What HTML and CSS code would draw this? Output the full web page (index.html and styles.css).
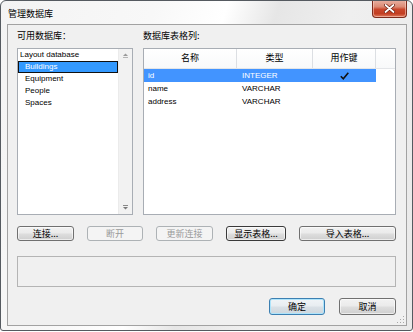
FILE: index.html
```html
<!DOCTYPE html>
<html lang="zh">
<head>
<meta charset="utf-8">
<title>管理数据库</title>
<link rel="stylesheet" href="styles.css">
</head>
<body>
<div class="window">
  <div class="titlebar">
    <span class="title">管理数据库</span>
    <div class="close">
      <svg width="11" height="9" viewBox="0 0 11 9">
        <path d="M1.5 1 L9.5 8 M9.5 1 L1.5 8" stroke="#6b2214" stroke-width="3.2" stroke-linecap="round"/>
        <path d="M1.5 1 L9.5 8 M9.5 1 L1.5 8" stroke="#ffffff" stroke-width="1.7" stroke-linecap="round"/>
      </svg>
    </div>
  </div>
  <div class="client">
    <div class="top">
      <div class="pane left">
        <div class="label">可用数据库：</div>
        <div class="listbox">
          <ul class="items">
            <li class="root">Layout database</li>
            <li class="sel">Buildings</li>
            <li>Equipment</li>
            <li>People</li>
            <li>Spaces</li>
          </ul>
          <div class="vscroll">
            <svg width="7" height="5" viewBox="0 0 7 5"><path d="M3.5 0.5 L6 3 L1 3 Z" fill="#9a9a9a"/><rect x="1" y="4" width="5" height="1" fill="#b5b5b5"/></svg>
            <svg width="7" height="5" viewBox="0 0 7 5"><rect x="1" y="0" width="5" height="1" fill="#8a8a8a"/><path d="M1 2 L6 2 L3.5 4.5 Z" fill="#7a7a7a"/></svg>
          </div>
        </div>
      </div>
      <div class="pane right">
        <div class="label">数据库表格列:</div>
        <div class="table">
          <div class="thead">
            <div class="th c1">名称</div>
            <div class="th c2">类型</div>
            <div class="th c3">用作键</div>
            <div class="th c4"></div>
          </div>
          <div class="tr sel">
            <div class="td c1">id</div>
            <div class="td c2">INTEGER</div>
            <div class="td c3 chk">
              <svg width="9" height="8" viewBox="0 0 9 8"><path d="M0.8 4.2 L3.3 6.8 L8.3 0.8" fill="none" stroke="#111" stroke-width="1.6"/></svg>
            </div>
          </div>
          <div class="tr">
            <div class="td c1">name</div>
            <div class="td c2">VARCHAR</div>
            <div class="td c3"></div>
          </div>
          <div class="tr">
            <div class="td c1">address</div>
            <div class="td c2">VARCHAR</div>
            <div class="td c3"></div>
          </div>
        </div>
      </div>
    </div>
    <div class="btnrow">
      <div class="btn w57">连接...</div>
      <div class="btn dis w56">断开</div>
      <div class="btn dis w57">更新连接</div>
      <div class="btn focus w60">显示表格...</div>
      <div class="btn w97">导入表格...</div>
    </div>
    <div class="status"></div>
    <div class="okrow">
      <div class="btn default w56">确定</div>
      <div class="btn w57">取消</div>
    </div>
    <div class="grip">
      <svg width="8" height="8" viewBox="0 0 8 8">
        <rect x="6" y="0" width="1" height="1" fill="#a8a8a8"/>
        <rect x="3" y="3" width="1" height="1" fill="#a8a8a8"/>
        <rect x="6" y="3" width="1" height="1" fill="#a8a8a8"/>
        <rect x="0" y="6" width="1" height="1" fill="#a8a8a8"/>
        <rect x="3" y="6" width="1" height="1" fill="#a8a8a8"/>
        <rect x="6" y="6" width="1" height="1" fill="#a8a8a8"/>
      </svg>
    </div>
  </div>
</div>
</body>
</html>
```

FILE: styles.css
```css
* {
  box-sizing: border-box;
  margin: 0;
  padding: 0;
}

body {
  margin: 0;
  background: #ffffff;
  font-family: "Liberation Sans", "Noto Sans CJK SC", sans-serif;
  font-size: 9px;
  color: #000;
}

.window {
  width: 413px;
  height: 331px;
  border: 1px solid #555a60;
  border-radius: 6px 6px 3px 3px;
  background: linear-gradient(108deg, #f3f3f3 0%, #f8f8f8 30%, #ffffff 44%, #e6e6e6 54%, #efefef 68%, #e9e9e9 100%);
  display: flex;
  flex-direction: column;
  position: relative;
  overflow: hidden;
}

.titlebar {
  height: 23px;
  display: flex;
  align-items: flex-start;
}

.title {
  padding: 7px 0 0 7px;
  line-height: 12px;
  font-family: "Noto Sans CJK SC", sans-serif;
  font-size: 9px;
}

.close {
  margin-left: auto;
  margin-right: 5px;
  margin-top: -1px;
  width: 35px;
  height: 18px;
  border: 1px solid #7d2b1c;
  border-top: none;
  border-radius: 0 0 4px 4px;
  background: linear-gradient(#e9b2a4 0%, #dc8a74 40%, #c9462b 55%, #c23e22 80%, #e07a5c 100%);
  box-shadow: inset 0 0 0 1px rgba(255, 220, 210, 0.5);
  display: flex;
  align-items: center;
  justify-content: center;
}

.client {
  margin: 0 5px 0 6px;
  height: 302px;
  border: 1px solid #a2a2a2;
  background: #f0f0f0;
  padding: 5px 0 0 9px;
  position: relative;
}

.top {
  display: flex;
  gap: 10px;
}

.left {
  width: 116px;
}

.right {
  width: 253px;
}

.label {
  height: 12px;
  line-height: 12px;
  margin-bottom: 6px;
  font-family: "Noto Sans CJK SC", sans-serif;
  font-size: 9px;
}

.listbox {
  height: 167px;
  border: 1px solid #a8adb4;
  background: #fff;
  display: flex;
}

.items {
  flex: 1;
  list-style: none;
}

.items li {
  height: 12px;
  line-height: 12px;
  font-size: 8px;
  padding-left: 7px;
  white-space: nowrap;
}

.items li.root {
  padding-left: 2px;
}

.items li.sel {
  background: #3399ff;
  color: #fff;
  box-shadow: inset 0 0 0 1px #101010;
}

.vscroll {
  width: 14px;
  background: #f2f2f2;
  border-left: 1px solid #ebebeb;
  display: flex;
  flex-direction: column;
  justify-content: space-between;
  align-items: center;
  padding: 4px 0 4px;
}

.table {
  height: 167px;
  border: 1px solid #a8adb4;
  background: #fff;
}

.thead {
  display: flex;
  height: 20px;
  border-bottom: 1px solid #e3e5e8;
  background: linear-gradient(#ffffff, #f8f9fa);
}

.th {
  border-right: 1px solid #dcdfe3;
  text-align: center;
  line-height: 18px;
  font-family: "Noto Sans CJK SC", sans-serif;
  font-size: 9px;
}

.th.c4 {
  border-right: none;
  flex: 1;
}

.c1 { width: 93px; }
.c2 { width: 76px; }
.c3 { width: 63px; }

.tr {
  display: flex;
  height: 13px;
  line-height: 13px;
  font-size: 8px;
  width: 232px;
}

.tr.sel {
  background: #4294ff;
  color: #fff;
}

.td {
  padding-left: 4px;
  white-space: nowrap;
}

.td.c2 {
  padding-left: 5px;
}

.td.chk {
  padding-left: 0;
  display: flex;
  align-items: center;
  justify-content: center;
}

.btnrow {
  display: flex;
  gap: 13px;
  margin-top: 11px;
}

.btn {
  height: 15px;
  border: 1px solid #707070;
  border-radius: 3px;
  background: linear-gradient(#f2f2f2 0%, #ebebeb 45%, #dddddd 55%, #cfcfcf 100%);
  box-shadow: inset 0 0 0 1px rgba(255, 255, 255, 0.6);
  text-align: center;
  line-height: 13px;
  font-family: "Noto Sans CJK SC", sans-serif;
  font-size: 9px;
  white-space: nowrap;
}

.btn.dis {
  border-color: #adb2b5;
  background: #f4f4f4;
  box-shadow: none;
  color: #9a9a9a;
}

.btn.focus {
  border-color: #3a3a3a;
}

.btn.default {
  border-color: #3c7fb1;
  background: linear-gradient(#eaf6fd 0%, #d9f0fc 45%, #bee6fd 55%, #a7d9f5 100%);
  background: linear-gradient(#f0f4f7 0%, #e8edf1 45%, #d9e0e6 55%, #ced6dd 100%);
  box-shadow: inset 0 0 0 1px #aee4fb;
}

.w56 { width: 56px; }
.w57 { width: 57px; }
.w60 { width: 60px; }
.w97 { width: 97px; }

.status {
  margin-top: 15px;
  width: 379px;
  height: 31px;
  border: 1px solid #b4b4b4;
  background: #f0f0f0;
}

.okrow {
  margin-top: 11px;
  width: 379px;
  display: flex;
  justify-content: flex-end;
  gap: 14px;
}

.okrow .btn {
  height: 17px;
  line-height: 15px;
}

.grip {
  position: absolute;
  right: 1px;
  bottom: 1px;
  width: 8px;
  height: 8px;
  display: flex;
}
```
